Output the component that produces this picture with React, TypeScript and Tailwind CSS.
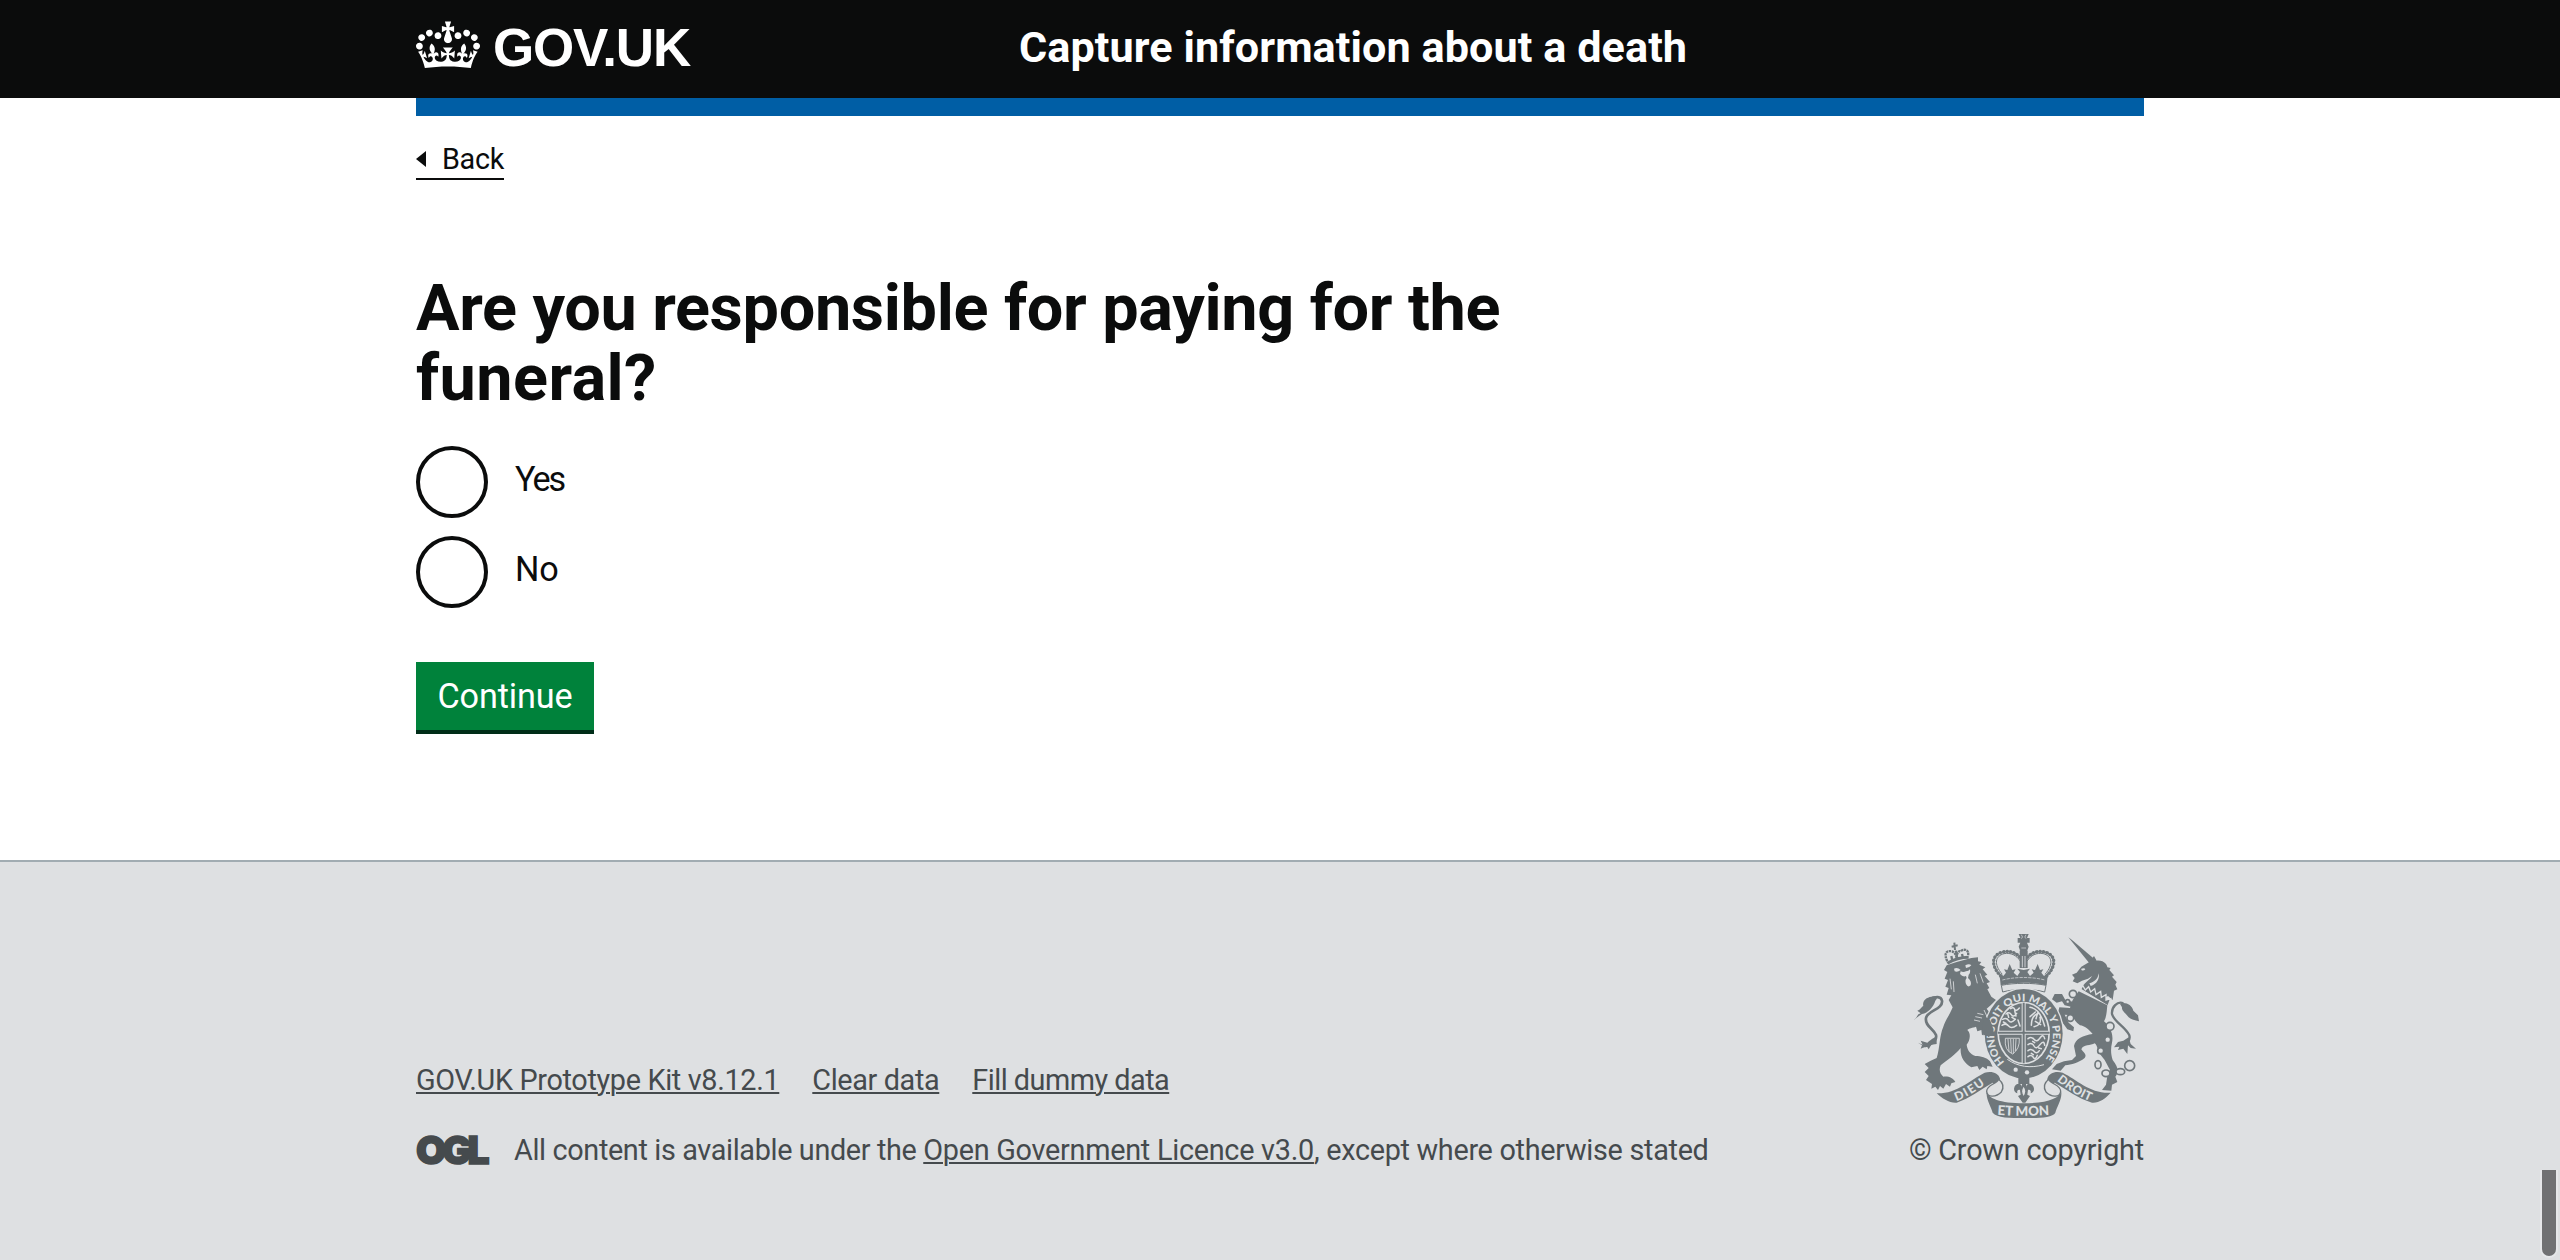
import React from 'react';

const INK = '#6f777b';
const PAPER = '#dee0e2';

function Crown() {
  return (
    <svg viewBox="0 0 132 97" className="h-[48px] w-[64px] shrink-0" fill="currentColor" fillRule="evenodd">
      <path d="M25 30.2c3.5 1.5 7.7-.2 9.1-3.7 1.5-3.6-.2-7.8-3.9-9.2-3.6-1.4-7.6.3-9.1 3.9-1.4 3.5.3 7.5 3.9 9zM9 39.5c3.6 1.5 7.8-.2 9.2-3.7 1.5-3.6-.2-7.8-3.9-9.1-3.6-1.5-7.6.2-9.1 3.8-1.4 3.5.3 7.5 3.8 9zM4.4 57.2c3.5 1.5 7.7-.2 9.1-3.8 1.5-3.6-.2-7.7-3.9-9.1-3.5-1.5-7.6.3-9.1 3.8-1.4 3.5.3 7.6 3.9 9.1zm38.3-21.4c3.5 1.5 7.7-.2 9.1-3.8 1.5-3.6-.2-7.7-3.9-9.1-3.6-1.5-7.6.3-9.1 3.8-1.3 3.6.4 7.7 3.9 9.1zm64.4-5.6c-3.6 1.5-7.8-.2-9.1-3.7-1.5-3.6.2-7.8 3.8-9.2 3.6-1.4 7.7.3 9.2 3.9 1.3 3.5-.4 7.5-3.9 9zm15.9 9.3c-3.6 1.5-7.7-.2-9.1-3.7-1.5-3.6.2-7.8 3.7-9.1 3.6-1.5 7.7.2 9.2 3.8 1.5 3.5-.3 7.5-3.8 9zm4.7 17.7c-3.6 1.5-7.8-.2-9.2-3.8-1.5-3.6.2-7.7 3.9-9.1 3.6-1.5 7.7.3 9.2 3.8 1.3 3.5-.4 7.6-3.9 9.1zM89.3 35.8c-3.6 1.5-7.8-.2-9.2-3.8-1.4-3.6.2-7.7 3.9-9.1 3.6-1.5 7.7.3 9.2 3.8 1.4 3.6-.3 7.7-3.9 9.1zM69.7 17.7l8.9 4.7V9.3l-8.9 2.8c-.2-.3-.5-.6-.9-.9L72.4 0H59.6l3.5 11.2c-.3.3-.6.5-.9.9l-8.8-2.8v13.1l8.8-4.7c.3.3.6.7.9.9l-5 15.4v.1c-.2.8-.4 1.6-.4 2.4 0 4.1 3.1 7.5 7 8.1h.2c.3 0 .7.1 1 .1.4 0 .7 0 1-.1h.2c4-.6 7.1-4.1 7.1-8.1 0-.8-.1-1.7-.4-2.4V34l-5.1-15.4c.4-.2.7-.6 1-.9zM66 92.8c16.9 0 32.8 1.1 47.1 3.2 4-16.9 8.9-26.7 14-33.5l-9.6-3.4c1 4.9 1.1 7.2 0 10.2-1.5-1.4-3-4.3-4.2-8.7L108.6 76c2.8-2 5-3.2 7.5-3.3-4.4 9.4-10 11.9-13.6 11.2-4.3-.8-6.3-4.6-5.6-7.9 1-4.7 5.7-5.9 8-.5 4.3-8.7-3-11.4-7.6-8.8 7.1-7.2 7.9-13.5 2.1-21.1-8 6.1-8.1 12.3-4.5 20.8-4.7-5.4-12.1-2.5-9.5 6.2 3.4-5.2 7.9-2 7.2 3.1-.6 4.3-6.4 7.8-13.5 7.2-10.3-.9-10.9-8-11.2-13.8 2.5-.5 7.1 1.8 11 7.3L80.2 60c-4.1 4.4-8 5.3-12.3 5.4 1.4-4.4 8-11.6 8-11.6H55.5s6.4 7.2 7.9 11.6c-4.2-.1-8-1-12.3-5.4l1.4 16.4c3.9-5.5 8.5-7.7 10.9-7.3-.3 5.8-.9 12.8-11.1 13.8-7.2.6-12.9-2.9-13.5-7.2-.7-5 3.8-8.3 7.1-3.1 2.7-8.7-4.6-11.6-9.4-6.2 3.7-8.5 3.6-14.7-4.6-20.8-5.8 7.6-5 13.9 2.2 21.1-4.7-2.6-11.9.1-7.7 8.8 2.3-5.5 7.1-4.2 8.1.5.7 3.3-1.3 7.1-5.7 7.9-3.5.7-9-1.8-13.5-11.2 2.5.1 4.7 1.3 7.5 3.3l-4.7-15.4c-1.2 4.4-2.7 7.2-4.3 8.7-1.1-3-.9-5.3 0-10.2l-9.5 3.4c5 6.9 9.9 16.7 14 33.5 14.8-2.1 30.8-3.2 47.7-3.2z" />
    </svg>
  );
}

function Lion() {
  return (
    <g>
      {/* tail */}
      <path d="M98 378 C120 378 142 362 138 345 C130 325 104 318 108 294 C112 272 160 268 156 242 C153 228 136 230 124 236" fill="none" stroke={INK} strokeWidth="8" />
      <path d="M72 300 C84 290 80 284 92 280 L82 272 C92 270 92 262 100 258 C96 244 108 232 124 230 C138 226 146 232 136 242 C130 262 114 278 96 282 C88 286 82 292 72 300z" />
      <path d="M84 368 L98 374 L92 362 L112 368 C126 356 132 352 140 350 L140 372 L124 374 L116 388 L110 378 L92 386 L96 376z" />
      {/* body, mane and legs */}
      <path d="M162 150 L170 136 L200 126 L244 114 L264 112 L264 124 L274 126 L268 134 L286 142 L278 148 L292 164 L284 168 L300 186 L290 190 L298 204 L292 208 L304 230 L318 240 L302 256 L290 266 L312 296 L318 316 L322 338 L300 350 L288 354 L284 342 L276 346 L274 330 L262 334 L258 320 C248 324 236 324 232 330 C244 340 240 362 230 374 C232 390 240 402 256 408 C272 408 290 412 300 424 L308 440 L292 438 L290 448 L278 440 L268 450 L262 438 L244 442 C222 430 210 410 212 384 C196 404 172 420 152 436 C146 450 150 462 160 470 C176 468 190 474 196 486 L184 490 L180 500 L168 492 L160 506 L150 498 L144 510 L136 500 L124 506 L126 492 L108 480 L116 468 L104 456 L116 444 L104 432 L122 422 L140 414 C150 384 148 346 160 320 C166 300 180 284 188 262 L176 240 L184 226 L170 224 L176 204 L166 200 L174 180 L164 176 L172 156z" />
      {/* face */}
      <g fill={PAPER}>
        <path d="M192 146 q10-6 20 4 q-10 8 -18 4z M226 136 q12-6 18 0 q-6 8 -16 8z" />
        <path d="M212 154 q8 4 16 0 q8 0 12-6 q2 12 -4 16 l-2 10 q12 10 8 22 q-8 8 -14-4 q-4-12 2-18 l-2-6 q-10 4 -18-6z" />
      </g>
      <path d="M180 176 L184 208 M190 184 L192 216 M256 164 L262 190 M270 160 L280 188 M262 280 L280 284 M256 290 L276 294 M252 300 L270 304 M282 270 L296 300" fill="none" stroke={PAPER} strokeWidth="2.5" />
      {/* crown */}
      <g fill="none" stroke={INK}>
        <path d="M172 124 C160 100 170 90 186 94 C196 98 198 106 200 114 C200 98 206 92 212 94 C224 84 238 90 234 108" strokeWidth="7" strokeDasharray="7 2" />
        <path d="M172 130 C192 118 212 112 236 112" strokeWidth="9" />
        <path d="M198 92 L202 118 M184 108 l3 14 M216 102 l3 12" strokeWidth="7" />
        <path d="M193 68 L195 90 M185 80 L203 76" strokeWidth="6" />
      </g>
    </g>
  );
}

function Unicorn() {
  return (
    <g>
      {/* tail */}
      <path d="M700 250 C682 242 664 262 666 282 C672 306 706 320 718 346 C722 362 710 376 690 374" fill="none" stroke={INK} strokeWidth="7" />
      <path d="M690 252 C704 244 726 254 730 272 L744 286 L747 304 C734 300 724 300 716 292 C708 280 694 272 696 262z" />
      <path d="M672 382 L684 366 L700 362 L716 352 L722 372 L738 386 L722 384 L714 376 L712 402 L700 386 L684 390 L688 380z" />
      {/* horn */}
      <path d="M535 52 L546 60 L612 116 L600 132z" />
      {/* head and mane */}
      <path d="M598 126 L612 108 L620 122 C644 120 652 136 652 142 L662 144 L658 150 L672 166 L666 170 L680 186 L676 194 L682 208 L672 212 L668 240 L654 228 L640 236 L604 214 L574 206 C580 190 600 180 606 168 L594 176 L576 182 L562 190 L548 184 L554 174 L546 164 L560 158 L574 140z" />
      <path d="M574 146 q10-4 12 2 q-6 6 -12 2z M598 190 C612 186 624 178 626 160 C630 176 620 194 602 198z" fill={PAPER} />
      {/* coronet collar */}
      <path d="M572 208 L578 196 L586 210 L596 200 L602 216 L614 206 L618 224 L632 214 L634 232 L648 224 L648 240 L662 236 L654 258z" fill={INK} stroke={PAPER} strokeWidth="4" />
      {/* body and legs */}
      <path d="M566 214 L652 256 C650 276 650 290 642 304 C658 318 672 340 666 368 C662 384 662 402 668 420 C684 440 688 456 676 470 L682 486 L666 494 L664 512 L636 510 L648 494 L652 468 L660 450 L644 420 L628 400 C622 388 622 376 614 370 C602 378 580 372 574 388 C580 398 592 402 584 414 C566 428 544 434 526 436 L512 452 L486 448 L500 432 L522 424 L546 420 L558 408 L552 378 C556 356 580 346 608 342 C596 328 584 318 570 316 C556 306 552 296 546 286 L524 284 L536 308 L552 322 L550 334 L532 328 L518 308 L504 278 L508 262 L540 264 L548 240z" />
      <path d="M548 262 L524 256 L516 244 L500 248 L486 238 L494 222 L516 222 L526 240 L552 246z" />
      {/* chain */}
      <g fill={PAPER} stroke={INK} strokeWidth="5">
        <circle cx="549" cy="222" r="11" /><circle cx="533" cy="245" r="6" /><circle cx="541" cy="294" r="10" />
        <circle cx="660" cy="319" r="12" /><circle cx="653" cy="359" r="9" /><circle cx="632" cy="392" r="9" />
        <ellipse cx="624" cy="434" rx="9" ry="12" /><ellipse cx="648" cy="460" rx="12" ry="10" /><ellipse cx="691" cy="455" rx="13" ry="9" />
        <circle cx="719" cy="437" r="15" />
      </g>
    </g>
  );
}

function ImperialCrown() {
  return (
    <g>
      <path d="M386 42 h30 l-5 12 h8 v14 h-8 l5 12 -5 14 h-20 l-5-14 5-12 h-8 v-14 h8z" />
      <path d="M394 44 q7 8 0 12 M408 44 q-7 8 0 12 M394 84 h14" stroke={PAPER} strokeWidth="2" fill="none" />
      {/* pearled arches */}
      <g fill="none" stroke={INK} strokeLinecap="round">
        <path d="M332 168 C300 134 306 104 338 96 C360 90 384 100 394 118" strokeWidth="10" strokeDasharray="1 9.5" />
        <path d="M470 168 C502 134 496 104 464 96 C442 90 418 100 408 118" strokeWidth="10" strokeDasharray="1 9.5" />
        <path d="M336 162 C310 132 316 108 342 101 C362 97 380 106 390 122" strokeWidth="3" />
        <path d="M466 162 C492 132 486 108 460 101 C440 97 422 106 412 122" strokeWidth="3" />
      </g>
      <path d="M389 92 h24 v52 h-24z" />
      <path d="M397 108 v34 M405 108 v34" stroke={PAPER} strokeWidth="2.5" />
      {/* fleurs and circlet */}
      <path d="M328 158 L340 168 L348 158 L342 148 L352 150 L359 132 L367 150 L377 148 L371 158 L382 168 L390 156 L382 146 L401 150 L420 146 L412 156 L420 168 L431 158 L425 148 L435 150 L443 132 L450 150 L460 148 L454 158 L462 168 L474 158 L470 196 C430 186 372 186 332 196z" />
      <path d="M337 180 C376 170 426 170 465 180" fill="none" stroke={PAPER} strokeWidth="2" strokeDasharray="10 3" />
      <path d="M334 196 C372 188 430 188 468 196 L464 216 C430 206 372 206 338 216z" fill={PAPER} stroke={INK} strokeWidth="3" />
    </g>
  );
}

function Shield() {
  return (
    <g>
      <ellipse cx="401" cy="341" rx="121" ry="138" fill={PAPER} />
      <ellipse cx="401" cy="341" rx="117" ry="134" />
      <ellipse cx="401" cy="339" rx="79" ry="94" fill={PAPER} />
      <ellipse cx="401" cy="339" rx="74" ry="89" />
      <path id="garter" d="M344 427 A88 104 0 1 1 465 419" fill="none" />
      <text fill={PAPER} className="font-['Lato'] text-[31px] font-black">
        <textPath href="#garter" textLength="463" lengthAdjust="spacingAndGlyphs">HONI SOIT QUI MAL Y PENSE</textPath>
      </text>
      {/* quarterings */}
      <g fill="none" stroke={PAPER} strokeWidth="4.5" strokeLinecap="round">
        <path d="M348 282 q10-8 16 2 t16-4 M338 298 q12-6 18 4 t20-4 M336 316 q12-8 20 2 t24-2 M362 266 q8-6 12 2 t14-4 M340 306 l8 4 M366 292 l10 6 M352 278 l4 14 M374 272 l4 16 M384 300 l6 18" />
        <path d="M414 356 q10-8 18 2 t18-4 14 2 M414 374 q12-8 18 4 t18-4 14 2 M414 392 q10-8 18 2 t16-2 M414 410 q10-8 16 2 t12-6 M428 364 l6 4 M446 384 l8 2 M424 400 l6 4" />
        <path d="M420 262 q30 4 44 56 M424 316 q0-30 22-36 M432 320 q24-4 18-28 M420 290 l16-14 M436 304 l16 10 M444 276 l-6 20" />
        <path d="M346 356 q-4 36 22 46 q22-16 20-46z M354 358 l3 36 M362 358 l2 40 M370 358 l0 42 M378 358 l-2 34" strokeWidth="2.5" />
      </g>
      <path d="M401 248 V430 M323 338 H479" stroke={PAPER} strokeWidth="12" />
      <path d="M401 248 V430 M323 338 H479" stroke={INK} strokeWidth="6" />
      {/* garter buckle */}
      <path d="M352 418 C384 440 420 446 462 434" fill="none" stroke={PAPER} strokeWidth="3" />
      <circle cx="377" cy="449" r="6.5" fill={PAPER} />
      <circle cx="411" cy="457" r="6.5" fill={PAPER} />
    </g>
  );
}

function Motto() {
  return (
    <g>
      {/* stem and fleur */}
      <path d="M385 474 h33 v18 h-10 v8 c4-14 22-10 24 6 c0 8-4 12-10 14 c2-8-2-12-8-10 l-2 14 l8 4 l-14 20 h-8 l-14-20 l8-4 l-2-14 c-6-2-10 2-8 10 c-6-2-10-6-10-14 c2-16 20-20 24-6 v-8 h-11z" />
      <path d="M401 496 c-9 14-9 22 0 36 c9-14 9-22 0-36z" fill={PAPER} stroke={INK} strokeWidth="4" />
      {/* ribbon */}
      <path d="M140 520 C200 522 240 480 284 458 C304 452 326 458 330 476 C332 490 318 494 308 488 C270 510 240 534 200 548 C180 550 156 536 140 520z" />
      <path d="M662 518 C602 522 562 480 518 458 C498 452 476 458 472 476 C470 490 484 494 494 488 C532 510 562 534 606 548 C626 550 646 536 662 518z" />
      <path d="M326 478 C318 494 290 494 290 514 C292 536 320 530 334 516 C344 500 336 486 326 478z" fill={PAPER} stroke={INK} strokeWidth="4" />
      <path d="M476 478 C484 494 512 494 512 514 C510 536 482 530 468 516 C458 500 466 486 476 478z" fill={PAPER} stroke={INK} strokeWidth="4" />
      <path d="M290 516 C294 534 330 550 401 550 C472 550 508 534 514 516 C516 540 500 560 496 578 C488 594 440 594 401 594 C362 594 320 594 308 578 C304 560 288 540 290 516z" />
      <path id="motto-left" d="M199 543 C232 532 262 510 296 486" fill="none" />
      <path id="motto-mid" d="M322 584 C370 588 432 588 484 584" fill="none" />
      <path id="motto-right" d="M500 482 C535 509 565 532 616 549" fill="none" />
      <g fill={PAPER} className="font-['Lato'] font-black">
        <text className="text-[36px]"><textPath href="#motto-left" textLength="100">DIEU</textPath></text>
        <text className="text-[40px]"><textPath href="#motto-mid" textLength="156">ET MON</textPath></text>
        <text className="text-[36px]"><textPath href="#motto-right" textLength="118">DROIT</textPath></text>
      </g>
    </g>
  );
}

function RoyalArms() {
  return (
    <svg viewBox="72 42 675 552" className="h-[184px] w-[225px] overflow-visible" fill={INK}>
      <Lion />
      <Unicorn />
      <ImperialCrown />
      <Shield />
      {/* lion's forepaw over the garter */}
      <path d="M284 288 L300 300 L308 320 L312 340 L302 346 L296 352 L290 344 L280 346 L276 320z" />
      <Motto />
    </svg>
  );
}

function Radio({ label, className }: { label: string; className: string }) {
  return (
    <label className="flex h-[72px] items-center gap-[27px]">
      <span className="size-[72px] shrink-0 rounded-full border-4 border-[#0b0c0c]" />
      <span className={`-mt-[7px] text-[34.2px] leading-[40px] ${className}`}>{label}</span>
    </label>
  );
}

function FooterLink({ children, className = '' }: { children: React.ReactNode; className?: string }) {
  return (
    <a href="#" className={`underline decoration-2 underline-offset-[2px] ${className}`}>
      {children}
    </a>
  );
}

export default function App() {
  return (
    <div className="relative flex h-[1260px] w-[2560px] flex-col overflow-hidden bg-white font-['Roboto',sans-serif] text-[#0b0c0c]">
      <header className="h-[98px] shrink-0 bg-[#0b0c0c] text-white">
        <div className="mx-auto flex h-full w-[1728px] pb-[3px]">
          <div className="flex w-[603px] items-center">
            <div className="-mt-[5px]"><Crown /></div>
            <span className="ml-[13px] font-['Liberation_Sans',sans-serif] text-[53px] leading-[60px] font-bold tracking-[-1.2px]">GOV.UK</span>
          </div>
          <span className="flex items-center text-[43.2px] leading-none font-bold tracking-[0.07px]">Capture information about a death</span>
        </div>
      </header>
      <div className="mx-auto h-[18px] w-[1728px] shrink-0 bg-[#005ea5]" />

      <main className="mx-auto w-[1728px] grow">
        <a href="#" className="mt-[24px] flex h-[40px] w-[88px] items-center justify-between border-b-2 border-[#0b0c0c]">
          <svg viewBox="0 0 10 16" className="h-4 w-[10px]"><path d="M0 8 10 0V16z" fill="currentColor" /></svg>
          <span className="text-[28.8px] leading-[36px] tracking-[-0.3px]">Back</span>
        </a>
        <h1 className="mt-[93px] w-[1140px] text-[64.8px] leading-[70px] font-bold">
          <span className="tracking-[-0.34px]">Are you responsible for paying for the</span><br />
          <span className="tracking-[0.4px]">funeral?</span>
        </h1>
        <div className="mt-[33px] flex flex-col gap-[18px]">
          <Radio label="Yes" className="tracking-[-2px]" />
          <Radio label="No" className="tracking-[-0.2px]" />
        </div>
        <button className="mt-[54px] block h-[68px] w-[178px] bg-[#00823b] text-center text-[34.2px] leading-[69px] tracking-[-0.1px] text-white shadow-[0_4px_0_#002d18]">Continue</button>
      </main>

      <footer className="h-[400px] shrink-0 border-t-2 border-[#a1acb2] bg-[#dee0e2] text-[28.8px] leading-[36px] text-[#454a4d]">
        <div className="mx-auto flex w-[1728px] items-end justify-between pt-[72px]">
          <div>
            <nav className="mb-[34px] flex gap-[33px]">
              <FooterLink className="tracking-[-0.33px]">GOV.UK Prototype Kit v8.12.1</FooterLink>
              <FooterLink className="tracking-[-0.36px]">Clear data</FooterLink>
              <FooterLink className="tracking-[-0.5px]">Fill dummy data</FooterLink>
            </nav>
            <div className="flex items-center">
              <span className="w-[98px] font-['Inter',sans-serif] text-[39px] font-black tracking-[-4.1px] text-[#454a4d] [-webkit-text-stroke:1.5px_#454a4d]">OGL</span>
              <p>
                <span className="tracking-[-0.35px]">All content is available under the </span>
                <FooterLink className="tracking-[-0.26px]">Open Government Licence v3.0</FooterLink>
                <span className="tracking-[-0.29px]">, except where otherwise stated</span>
              </p>
            </div>
          </div>
          <div className="flex flex-col items-end">
            <div className="mr-[5px]"><RoyalArms /></div>
            <span className="mt-[14px] tracking-[-0.2px]">© Crown copyright</span>
          </div>
        </div>
      </footer>

      <div className="absolute right-[2px] bottom-[2px] h-[88px] w-[18px] rounded-b-full border-x-2 border-b-2 border-[#e6e8ea] bg-[#707173]" />
    </div>
  );
}
